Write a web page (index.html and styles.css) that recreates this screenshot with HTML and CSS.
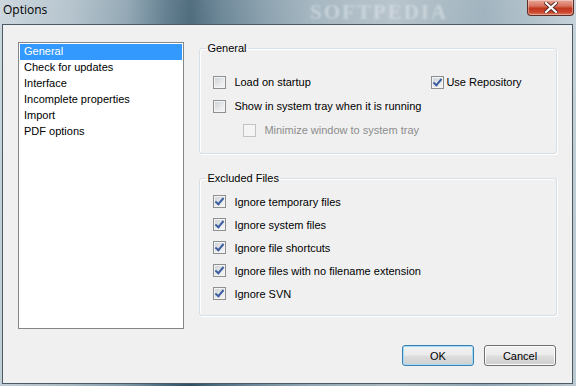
FILE: index.html
```html
<!DOCTYPE html>
<html>
<head>
  <title>Options</title>
  <link rel="stylesheet" href="styles.css">
</head>
<body>
  <div class="window">
    <div class="titlebar">
      <span class="title">Options</span>
      <span class="watermark">SOFTPEDIA</span>
      <button class="close" type="button">
        <svg width="14" height="11" viewBox="0 0 14 11">
          <path d="M2 1 L12 10 M12 1 L2 10" stroke="#5a2a22" stroke-width="4" stroke-linecap="square"/>
          <path d="M2 1 L12 10 M12 1 L2 10" stroke="#fff" stroke-width="2.2" stroke-linecap="square"/>
        </svg>
      </button>
    </div>

    <div class="client">
      <ul class="nav">
        <li class="selected">General</li>
        <li>Check for updates</li>
        <li>Interface</li>
        <li>Incomplete properties</li>
        <li>Import</li>
        <li>PDF options</li>
      </ul>

      <div class="panel">
        <fieldset class="group general">
          <legend>General</legend>
          <div class="row split">
            <label class="check"><span class="box"></span>Load on startup</label>
            <label class="check tight"><span class="box on"></span>Use Repository</label>
          </div>
          <div class="row">
            <label class="check"><span class="box"></span>Show in system tray when it is running</label>
          </div>
          <div class="row indent">
            <label class="check disabled"><span class="box"></span>Minimize window to system tray</label>
          </div>
        </fieldset>

        <fieldset class="group excluded">
          <legend>Excluded Files</legend>
          <div class="row"><label class="check"><span class="box on"></span>Ignore temporary files</label></div>
          <div class="row"><label class="check"><span class="box on"></span>Ignore system files</label></div>
          <div class="row"><label class="check"><span class="box on"></span>Ignore file shortcuts</label></div>
          <div class="row"><label class="check"><span class="box on"></span>Ignore files with no filename extension</label></div>
          <div class="row"><label class="check"><span class="box on"></span>Ignore SVN</label></div>
        </fieldset>

        <div class="buttons">
          <button type="button" class="btn default">OK</button>
          <button type="button" class="btn">Cancel</button>
        </div>
      </div>
    </div>
  </div>
</body>
</html>
```

FILE: styles.css
```css
body {
  margin: 0;
  font-family: "Liberation Sans", Arial, sans-serif;
  font-size: 11px;
  color: #000;
}

.window {
  width: 576px;
  height: 386px;
  display: flex;
  flex-direction: column;
  overflow: hidden;
  background:
    linear-gradient(180deg, rgba(255,255,255,0.18), rgba(255,255,255,0) 60%),
    linear-gradient(90deg, #c2cfd7 0%, #a8b9c4 12%, #7f98a7 22%, #44667a 29%, #2d5064 33%, #4f6f82 38%, #7690a0 46%, #93a8b5 54%, #a9b8c1 68%, #8ea5b2 84%, #a7b9c4 94%, #bccad2 100%);
}

.titlebar {
  height: 24px;
  display: flex;
  align-items: flex-start;
  position: relative;
}

.title {
  font-family: "Open Sans", "Liberation Sans", sans-serif;
  font-size: 12px;
  line-height: 20px;
  padding-left: 3px;
}

.watermark {
  position: absolute;
  left: 310px;
  top: 0;
  font-family: "Liberation Serif", serif;
  font-weight: bold;
  font-size: 21px;
  line-height: 24px;
  letter-spacing: 2px;
  color: rgba(230, 236, 240, 0.5);
  filter: blur(1.3px);
}

.close {
  margin-left: auto;
  margin-right: 2px;
  width: 47px;
  height: 16px;
  padding: 0;
  border: 1px solid #5c2e28;
  border-top: none;
  border-radius: 0 0 4px 4px;
  background: linear-gradient(180deg, #e8a596 0%, #d8735e 40%, #c2381f 55%, #c9452c 80%, #de7a5e 100%);
  box-shadow: inset 0 0 0 1px rgba(255,255,255,0.35);
  display: flex;
  align-items: center;
  justify-content: center;
}

.client {
  flex: 1;
  margin: 0 3px 2px 2px;
  border: 1px solid #4a5b66;
  background: #f0f0f0;
  display: flex;
  gap: 15px;
  padding: 17px 15px 0 15px;
}

.nav {
  list-style: none;
  margin: 0;
  padding: 1px;
  width: 163px;
  height: 283px;
  border: 1px solid #82878c;
  background: #fff;
}

.nav li {
  height: 16px;
  line-height: 15px;
  padding-left: 4px;
}

.nav li.selected {
  background: #3399ff;
  color: #fff;
}

.panel {
  width: 359px;
  display: flex;
  flex-direction: column;
}

.group {
  margin: 0;
  padding: 0 13px 0 13px;
  border: 1px solid #d5dfe5;
  border-radius: 3px;
  box-shadow: 1px 1px 0 #fff, inset 1px 1px 0 #fff;
}

.group legend {
  padding: 0 1px;
  margin-left: -7px;
  line-height: 13px;
}

.general {
  padding-top: 15px;
  padding-bottom: 11px;
}

.general .row {
  height: 24px;
}

.excluded {
  margin-top: 18px;
  padding-top: 5px;
  padding-bottom: 10px;
}

.excluded .row {
  height: 23px;
}

.row {
  display: flex;
  align-items: center;
}

.split {
  display: grid;
  grid-template-columns: 218px auto;
  align-items: center;
}

.indent {
  padding-left: 30px;
}

.check {
  display: flex;
  align-items: center;
  gap: 8px;
}

.check.tight {
  gap: 2px;
}

.box {
  width: 11px;
  height: 11px;
  border: 1px solid #8e8f8f;
  background: linear-gradient(135deg, #cbcfd4 0%, #e6e8ea 55%, #f7f7f7 100%);
  box-shadow: inset 0 0 0 1px #f4f4f4;
  position: relative;
}

.box.on::after {
  content: "";
  position: absolute;
  left: 3px;
  top: 0px;
  width: 3px;
  height: 7px;
  border: solid #3d5ea0;
  border-width: 0 2px 2px 0;
  transform: rotate(40deg);
}

.check.disabled {
  color: #8d8d8d;
}

.check.disabled .box {
  border-color: #c3c3c3;
  background: #f4f4f4;
  box-shadow: none;
}

.buttons {
  margin-top: 29px;
  display: flex;
  justify-content: flex-end;
  gap: 10px;
  padding-right: 1px;
}

.btn {
  width: 72px;
  height: 21px;
  padding: 0;
  font-family: "Liberation Sans", Arial, sans-serif;
  font-size: 11px;
  color: #000;
  border: 1px solid #707070;
  border-radius: 3px;
  background: linear-gradient(180deg, #f2f2f2 0%, #ebebeb 48%, #dddddd 52%, #cfcfcf 100%);
  box-shadow: inset 0 0 0 1px #fcfcfc;
}

.btn.default {
  border-color: #3c7fb1;
  box-shadow: inset 0 0 0 1px #9fdcf7;
}
```
